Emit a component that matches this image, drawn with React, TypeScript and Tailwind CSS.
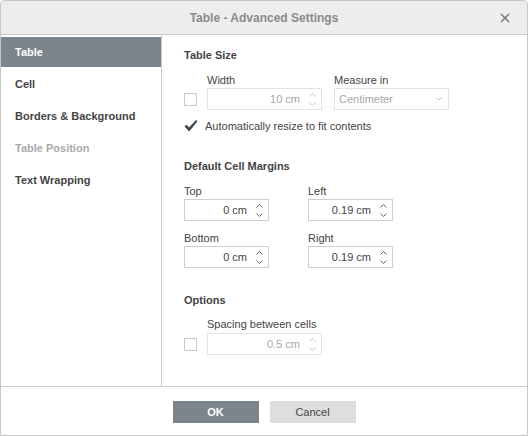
import React from 'react';

const Spinner: React.FC<{ disabled?: boolean }> = ({ disabled }) => (
  <div className="flex flex-col items-center gap-[5px] mr-[5px]">
    <svg width="7" height="4" viewBox="0 0 7 4" className={disabled ? 'text-[#c8c8c8]' : 'text-[#666]'}>
      <path d="M0.5 3.5 L3.5 0.5 L6.5 3.5" fill="none" stroke="currentColor" strokeWidth="1" />
    </svg>
    <svg width="7" height="4" viewBox="0 0 7 4" className={disabled ? 'text-[#c8c8c8]' : 'text-[#666]'}>
      <path d="M0.5 0.5 L3.5 3.5 L6.5 0.5" fill="none" stroke="currentColor" strokeWidth="1" />
    </svg>
  </div>
);

const SpinInput: React.FC<{ value: string; width: string; disabled?: boolean }> = ({ value, width, disabled }) => (
  <div
    className={`${width} h-[22px] flex items-center justify-end border ${
      disabled ? 'border-[#e2e2e2] text-[#a7a7a7]' : 'border-[#cfcfcf] text-[#444]'
    }`}
  >
    <span className="mr-[9px]">{value}</span>
    <Spinner disabled={disabled} />
  </div>
);

const Checkbox: React.FC<{ checked?: boolean }> = ({ checked }) =>
  checked ? (
    <svg width="14" height="14" viewBox="0 0 14 14" className="shrink-0">
      <path d="M0.5 7.5 L2.5 5.8 L5 8.6 L12 1 L13.5 2.3 L5.2 12.5 Z" fill="#444" />
    </svg>
  ) : (
    <div className="w-[13px] h-[13px] border border-[#c8c8c8] shrink-0" />
  );

const navItems = [
  { label: 'Table', active: true },
  { label: 'Cell' },
  { label: 'Borders & Background' },
  { label: 'Table Position', disabled: true },
  { label: 'Text Wrapping' },
];

export default function App() {
  return (
    <div className="w-[528px] h-[436px] bg-white border border-[#c6c6c6] rounded-t-[4px] flex flex-col overflow-hidden font-['Liberation_Sans',Arial,sans-serif] text-[11px] leading-[14px] text-[#444]">
      {/* header */}
      <div className="relative h-[34px] shrink-0 bg-[#ededed] border-b border-[#cbcbcb] flex items-center justify-center">
        <span className="text-[12px] font-bold text-[#8a8a8a]">Table - Advanced Settings</span>
        <svg width="10" height="10" viewBox="0 0 10 10" className="absolute right-[17px] top-[12px]">
          <path d="M1 1 L9 9 M9 1 L1 9" stroke="#7b7b7b" strokeWidth="1.6" />
        </svg>
      </div>

      <div className="flex flex-1">
        {/* sidebar */}
        <div className="w-[161px] shrink-0 border-r border-[#cbcbcb] pt-[2px]">
          {navItems.map((item) => (
            <div
              key={item.label}
              className={`h-[30px] mb-[2px] pl-[14px] flex items-center font-bold ${
                item.active ? 'bg-[#7d858c] text-white' : item.disabled ? 'text-[#a9a9a9]' : 'text-[#444]'
              }`}
            >
              {item.label}
            </div>
          ))}
        </div>

        {/* content */}
        <div className="flex-1 pl-[22px] pt-[13px]">
          <div className="font-bold">Table Size</div>

          <div className="flex items-end mt-[11px]">
            <div className="w-[23px] h-[22px] flex items-center">
              <Checkbox />
            </div>
            <div className="flex flex-col gap-[1px]">
              <span>Width</span>
              <SpinInput value="10 cm" width="w-[115px]" disabled />
            </div>
            <div className="flex flex-col gap-[1px] ml-[12px]">
              <span>Measure in</span>
              <div className="w-[115px] h-[22px] border border-[#e2e2e2] flex items-center justify-between pl-[4px] pr-[6px] text-[#a7a7a7]">
                <span>Centimeter</span>
                <svg width="6" height="4" viewBox="0 0 6 4">
                  <path d="M0.5 0.5 L3 3 L5.5 0.5" fill="none" stroke="#c0c0c0" strokeWidth="1" />
                </svg>
              </div>
            </div>
          </div>

          <div className="flex items-center mt-[8px] h-[16px]">
            <div className="w-[21px]">
              <Checkbox checked />
            </div>
            <span>Automatically resize to fit contents</span>
          </div>

          <div className="font-bold mt-[25px]">Default Cell Margins</div>

          <div className="grid grid-cols-[124px_85px] mt-[11px] gap-y-[10px]">
            <div className="flex flex-col gap-[1px]">
              <span>Top</span>
              <SpinInput value="0 cm" width="w-[85px]" />
            </div>
            <div className="flex flex-col gap-[1px]">
              <span>Left</span>
              <SpinInput value="0.19 cm" width="w-[85px]" />
            </div>
            <div className="flex flex-col gap-[1px]">
              <span>Bottom</span>
              <SpinInput value="0 cm" width="w-[85px]" />
            </div>
            <div className="flex flex-col gap-[1px]">
              <span>Right</span>
              <SpinInput value="0.19 cm" width="w-[85px]" />
            </div>
          </div>

          <div className="font-bold mt-[25px]">Options</div>

          <div className="flex items-end mt-[10px]">
            <div className="w-[23px] h-[22px] flex items-center">
              <Checkbox />
            </div>
            <div className="flex flex-col gap-[2px]">
              <span>Spacing between cells</span>
              <SpinInput value="0.5 cm" width="w-[115px]" disabled />
            </div>
          </div>
        </div>
      </div>

      {/* footer */}
      <div className="h-[49px] shrink-0 border-t border-[#cbcbcb] flex items-start justify-center gap-[11px] pt-[14px]">
        <button className="w-[86px] h-[22px] bg-[#7d858c] text-white font-bold text-[11px]">OK</button>
        <button className="w-[86px] h-[22px] bg-[#dedede] text-[#444] text-[11px]">Cancel</button>
      </div>
    </div>
  );
}
